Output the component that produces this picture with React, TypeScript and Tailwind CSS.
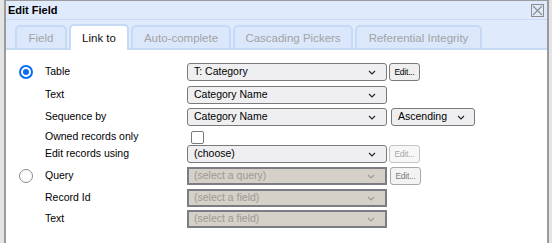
import { ReactNode } from 'react'

const font = { fontFamily: '"Liberation Sans", Arial, sans-serif' }

function Chevron({ disabled }: { disabled?: boolean }) {
  return (
    <svg width="8" height="5" viewBox="0 0 8 5" className="shrink-0">
      <path d="M1 1l3 3 3-3" fill="none" stroke={disabled ? '#9a9a9a' : '#222'} strokeWidth="1.1" />
    </svg>
  )
}

function Select({ value, width = 'w-[200px]', disabled }: { value: string; width?: string; disabled?: boolean }) {
  if (disabled) {
    return (
      <div className={`flex h-[18px] ${width} items-center justify-between border-2 border-[#7c7c84] bg-[#d5d0c8] pl-[5px] pr-[10px] text-[10.5px] text-[#9d9a94]`}>
        <span>{value}</span>
        <Chevron disabled />
      </div>
    )
  }
  return (
    <div className={`flex h-[18px] ${width} items-center justify-between rounded-[3px] border border-[#7a7a7a] bg-[#efeff1] pl-[6px] pr-[10px] text-[10.5px] text-black`}>
      <span>{value}</span>
      <Chevron />
    </div>
  )
}

function EditButton({ disabled, dim }: { disabled?: boolean; dim?: boolean }) {
  return (
    <div
      className={`ml-[2px] flex h-[18px] w-[31px] items-center justify-center rounded-[3px] border text-[8.5px] tracking-tight ${
        disabled ? 'border-[#c4c4c4] bg-[#f7f7f7] text-[#a8a8a8]' : dim ? 'border-[#a8a8a8] bg-[#f3f3f3] text-[#7a7a7a]' : 'border-[#7a7a7a] bg-[#efefef] text-black'
      }`}
    >
      Edit...
    </div>
  )
}

function Radio({ checked }: { checked?: boolean }) {
  if (checked) {
    return (
      <div className="flex h-[14px] w-[14px] items-center justify-center rounded-full border-2 border-[#0a6cf0] bg-white">
        <div className="h-[6px] w-[6px] rounded-full bg-[#0a6cf0]" />
      </div>
    )
  }
  return <div className="h-[14px] w-[14px] rounded-full border border-[#8a8a8a] bg-white" />
}

function Row({ h, radio, label, children }: { h: string; radio?: ReactNode; label: string; children: ReactNode }) {
  return (
    <div className={`flex ${h} items-start`}>
      <div className="flex h-[18px] w-[26px] items-center">{radio}</div>
      <div className="flex h-[18px] w-[142px] items-center text-[10.5px] text-black">{label}</div>
      <div className="flex items-start">{children}</div>
    </div>
  )
}

const tabs = ['Field', 'Link to', 'Auto-complete', 'Cascading Pickers', 'Referential Integrity']
const tabWidths = ['w-[52px]', 'w-[60px]', 'w-[100px]', 'w-[120px]', 'w-[127px]']

export default function App() {
  return (
    <div className="h-[243px] w-[552px] overflow-hidden bg-[#e4e4e4] pl-[4px] pr-[3px]" style={font}>
      <div className="h-[260px] border-x-2 border-t border-[#9b9b9b] bg-white">
        {/* title bar */}
        <div className="flex h-[19px] items-center justify-between border-b border-[#c9dbf6] bg-[#dfeafc] pl-[2px] pr-[3px]">
          <span className="text-[11px] font-bold text-black">Edit Field</span>
          <svg width="13" height="13" viewBox="0 0 13 13">
            <rect x="0.5" y="0.5" width="12" height="12" fill="none" stroke="#8c8c8c" />
            <path d="M2 2l9 9M11 2l-9 9" stroke="#8c8c8c" strokeWidth="1.1" />
          </svg>
        </div>

        {/* tabs */}
        <div className="flex h-[30px] items-end gap-[2px] border-b-2 border-[#c6d9f5] bg-[#dfeafc] pl-[9px]">
          {tabs.map((tab, i) => (
            <div
              key={tab}
              className={`-mb-[2px] flex ${tabWidths[i]} items-center justify-center rounded-t-[5px] border-x-2 border-t-2 pt-[2px] text-[11.5px] ${
                i === 1 ? 'h-[26px] border-[#c6d9f5] bg-white text-[#111]' : 'h-[25px] border-b-2 border-[#c6d9f5] bg-[#dbe7fb] text-[#a3a3a3]'
              }`}
            >
              {tab}
            </div>
          ))}
        </div>

        {/* body */}
        <div className="flex flex-col pl-[13px] pt-[13px]">
          <Row h="h-[23px]" radio={<Radio checked />} label="Table">
            <Select value="T: Category" />
            <EditButton />
          </Row>
          <Row h="h-[22px]" label="Text">
            <Select value="Category Name" />
          </Row>
          <Row h="h-[21px]" label="Sequence by">
            <Select value="Category Name" />
            <div className="ml-[4px] flex h-[18px] w-[84px] items-center justify-between rounded-[3px] border border-[#7a7a7a] bg-[#efeff1] pl-[6px] pr-[9px] text-[10.5px] text-black">
              <span>Ascending</span>
              <Chevron />
            </div>
          </Row>
          <div className="flex h-[16px] items-center">
            <div className="w-[26px]" />
            <div className="w-[142px] text-[10.5px] text-black">Owned records only</div>
            <div className="ml-[4px] h-[13px] w-[13px] rounded-[2px] border border-[#7a7a7a] bg-white" />
          </div>
          <Row h="h-[22px]" label="Edit records using">
            <Select value="(choose)" />
            <EditButton disabled />
          </Row>
          <Row h="h-[22px]" radio={<Radio />} label="Query">
            <Select value="(select a query)" disabled />
            <div className="ml-[1px]">
              <EditButton dim />
            </div>
          </Row>
          <Row h="h-[21px]" label="Record Id">
            <Select value="(select a field)" disabled />
          </Row>
          <Row h="h-[21px]" label="Text">
            <Select value="(select a field)" disabled />
          </Row>
        </div>
      </div>
    </div>
  )
}
